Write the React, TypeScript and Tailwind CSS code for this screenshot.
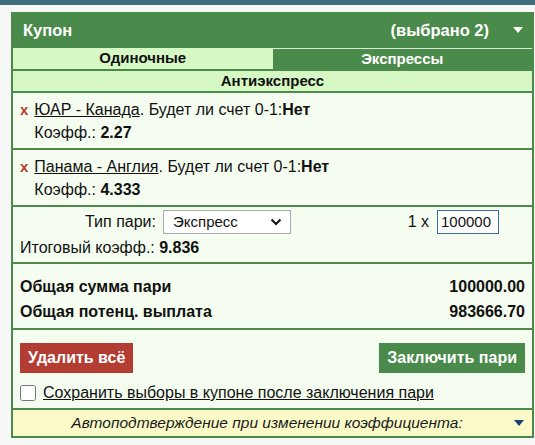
import { useState } from "react";

const bets = [
  { match: "ЮАР - Канада", market: "Будет ли счет 0-1:", pick: "Нет", odds: "2.27" },
  { match: "Панама - Англия", market: "Будет ли счет 0-1:", pick: "Нет", odds: "4.333" },
];

const Caret = ({ className }: { className?: string }) => (
  <svg width="10" height="6" viewBox="0 0 10 6" className={className}>
    <path d="M0 0 L10 0 L5 6 Z" fill="currentColor" />
  </svg>
);

const BetRow = ({ bet }: { bet: (typeof bets)[number] }) => (
  <div className="flex gap-[6px] border-b-2 border-[#4c8a4c] px-[7px] pt-[5px] pb-[4px] leading-[23px]">
    <span className="text-[15px] font-bold text-[#b5392f]">x</span>
    <div>
      <div>
        <span className="underline">{bet.match}</span>. {bet.market}
        <b>{bet.pick}</b>
      </div>
      <div>
        Коэфф.: <b>{bet.odds}</b>
      </div>
    </div>
  </div>
);

export default function App() {
  const [keep, setKeep] = useState(false);
  return (
    <div className="min-h-[445px] bg-[#f6f8f8] font-['Liberation_Sans',Arial,sans-serif] text-[16px] text-[#111]">
      <div className="h-[5px] bg-[#3d6e7b]" />
      <div className="pl-[11px] pt-[7px] pr-[1px]">
        <div className="border-2 border-t-0 border-[#4c8a4c] bg-[#f5fdf0]">
          {/* header */}
          <div className="flex h-[36px] items-center bg-[#4a8a4a] pl-[10px] pr-[9px] text-[16.5px] font-bold text-white">
            <span>Купон</span>
            <span className="ml-auto">(выбрано 2)</span>
            <Caret className="ml-[24px] text-white" />
          </div>

          {/* tabs */}
          <div className="grid grid-cols-2 text-[15px] font-bold">
            <div className="flex h-[21px] items-center justify-center bg-[#d5f8c4] text-[#111]">
              Одиночные
            </div>
            <div className="flex h-[21px] items-center justify-center border-t border-[#d9ecd9] bg-[#4a8a4a] text-white">
              Экспрессы
            </div>
          </div>
          <div className="flex h-[24px] items-center justify-center border-y-2 border-[#4c8a4c] bg-[#d5f8c4] text-[15px] font-bold">
            Антиэкспресс
          </div>

          {bets.map((bet) => (
            <BetRow key={bet.match} bet={bet} />
          ))}

          {/* bet type */}
          <div className="border-b-2 border-[#4c8a4c] px-[7px] pt-[2px] pb-[3px]">
            <div className="flex h-[26px] items-center">
              <span className="w-[136px] text-right">Тип пари:</span>
              <div className="ml-[7px] flex h-[24px] w-[128px] items-center justify-between border border-[#a9a9a9] bg-white pl-[9px] pr-[8px] text-[15px]">
                <span>Экспресс</span>
                <svg width="12" height="8" viewBox="0 0 12 8">
                  <path d="M1.5 1.5 L6 6 L10.5 1.5" stroke="#111" strokeWidth="2" fill="none" />
                </svg>
              </div>
              <span className="ml-auto">1 x</span>
              <div className="ml-[8px] mr-[26px] flex h-[24px] w-[62px] items-center border border-[#3b6ea5] bg-white pl-[3px] text-[15px]">
                100000
              </div>
            </div>
            <div className="mt-[2px] leading-[22px]">
              Итоговый коэфф.: <b>9.836</b>
            </div>
          </div>

          {/* totals */}
          <div className="border-b-2 border-[#4c8a4c] px-[7px] pt-[10px] pb-[4px] font-bold leading-[25px]">
            <div className="flex justify-between">
              <span>Общая сумма пари</span>
              <span>100000.00</span>
            </div>
            <div className="flex justify-between">
              <span>Общая потенц. выплата</span>
              <span>983666.70</span>
            </div>
          </div>

          {/* actions */}
          <div className="px-[7px] pt-[13px] pb-[4px]">
            <div className="flex justify-between">
              <button className="h-[30px] bg-[#b33c33] px-[8px] text-[16px] font-bold text-white">
                Удалить всё
              </button>
              <button className="h-[30px] bg-[#4a8a4a] px-[8px] text-[16px] font-bold text-white">
                Заключить пари
              </button>
            </div>
            <label className="mt-[9px] flex items-center gap-[7px] leading-[22px]">
              <input
                type="checkbox"
                checked={keep}
                onChange={() => setKeep(!keep)}
                className="h-[16px] w-[16px] rounded-[3px] border border-[#767676]"
              />
              <span className="underline">Сохранить выборы в купоне после заключения пари</span>
            </label>
          </div>

          {/* auto confirm */}
          <div className="flex h-[28px] items-center border-t-2 border-[#4c8a4c] bg-[#fafac9] pl-[7px] pr-[8px] text-[15.5px] italic text-[#1a1a1a]">
            <span className="flex-1 text-center">Автоподтверждение при изменении коэффициента:</span>
            <Caret className="text-[#1f3f7a]" />
          </div>
        </div>
      </div>
    </div>
  );
}
